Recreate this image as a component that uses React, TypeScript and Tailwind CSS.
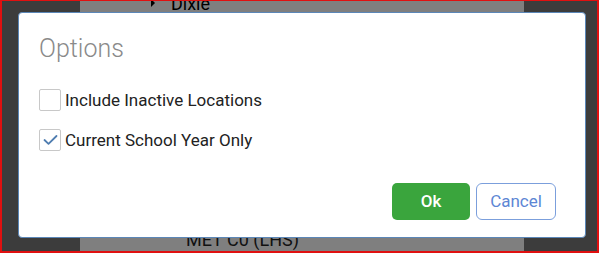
import React from "react";

const Checkbox: React.FC<{ checked?: boolean; label: string }> = ({ checked, label }) => (
  <label className="flex items-center h-[22px]">
    <span className="w-[22px] h-[22px] border border-[#c8c8c8] rounded-[2px] bg-white flex items-center justify-center">
      {checked && (
        <svg width="15" height="12" viewBox="0 0 15 12" fill="none">
          <path d="M1.5 6 L5.5 9.8 L13.5 2" stroke="#4f7db0" strokeWidth="1.8" strokeLinecap="round" strokeLinejoin="round" />
        </svg>
      )}
    </span>
    <span className="ml-[4px] text-[17px] leading-[22px] text-[#222]">{label}</span>
  </label>
);

export default function App() {
  return (
    <div className="relative w-[599px] h-[253px] overflow-hidden bg-[#3c3c3c] border-l-2 border-r-2 border-t border-b-2 border-[#e01010] font-['Roboto','Liberation_Sans',sans-serif]">
      {/* page behind the modal */}
      <div className="ml-[78px] w-[444px] h-full bg-[#7f7f7f] flex flex-col justify-between">
        <div className="-mt-[8px] flex items-center h-[20px] text-[18px] text-black">
          <span className="ml-[71px] mr-[16px] w-0 h-0 border-y-[4px] border-y-transparent border-l-[4px] border-l-black" />
          Dixie
        </div>
        <div className="mb-[1px] ml-[106px] text-[18px] leading-[20px] text-[#111]">MET C0 (LHS)</div>
      </div>

      {/* modal */}
      <div className="absolute left-[16px] top-[11px] w-[568px] h-[226px] bg-white border border-[#5b87b8] rounded-[4px] flex flex-col pl-[20px] pr-[29px]">
        <h2 className="mt-[21px] text-[25px] leading-[29px] font-light text-[#8a8a8a]">Options</h2>
        <div className="mt-[26px] flex flex-col gap-[18px]">
          <Checkbox label="Include Inactive Locations" />
          <Checkbox checked label="Current School Year Only" />
        </div>
        <div className="mt-auto mb-[17px] flex justify-end gap-[6px]">
          <button className="w-[78px] h-[37px] rounded-[5px] bg-[#3aa53d] text-white text-[17px] font-medium">Ok</button>
          <button className="w-[80px] h-[37px] rounded-[6px] bg-white border border-[#7b9fdc] text-[#5d86d4] text-[17px]">Cancel</button>
        </div>
      </div>
    </div>
  );
}
